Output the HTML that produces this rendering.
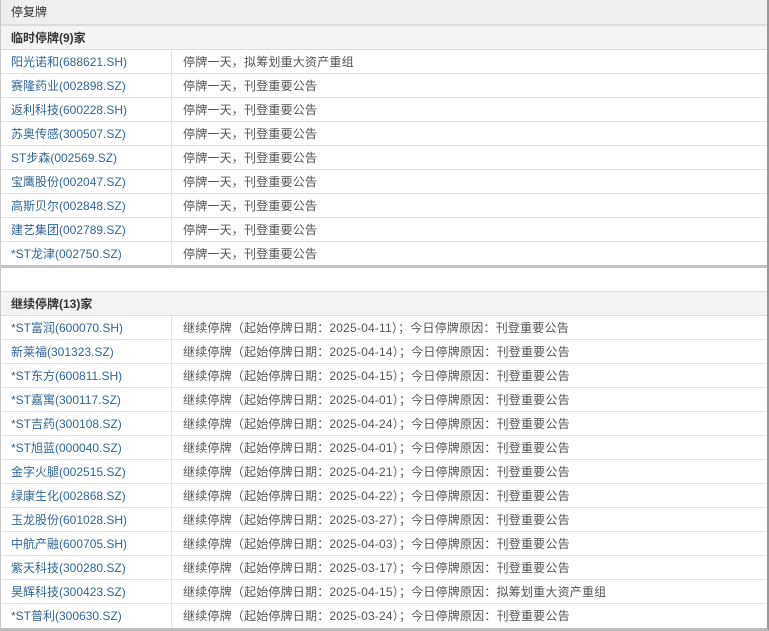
<!DOCTYPE html>
<html><head><meta charset="utf-8"><style>
*{margin:0;padding:0;box-sizing:border-box}
body{width:769px;height:631px;background:#fff;font-family:"Liberation Sans","Noto Sans CJK SC",sans-serif;font-size:12px;color:#555;position:relative;overflow:hidden}
.frame{position:absolute;left:0;top:0;width:769px;height:631px;border-left:1px solid #c8c8c8;border-right:2px solid #999;border-bottom:3px solid #bbb}
.bar{position:absolute;left:1px;right:2px;height:25px;line-height:25px;padding-left:10px;color:#333;border-bottom:1px solid #ddd}
.title{top:0;background:#efefef}
.hd{background:#f4f4f4;font-weight:bold;border-top:1px solid #ddd}
.row{position:absolute;left:1px;right:2px;height:24px;line-height:24px;border-bottom:1px solid #e2e2e2}
.row .a{position:absolute;left:0;width:171px;padding-left:10px;color:#336699;border-right:1px solid #e2e2e2;height:23px}
.row .b{position:absolute;left:182px;letter-spacing:0.2px}
.sep{position:absolute;left:1px;right:2px;top:265px;height:3px;background:#c4c4c4}
</style></head><body>
<div class="frame"></div>
<div class="bar title">停复牌</div>
<div class="bar hd" style="top:25px">临时停牌(9)家</div>
<div class="row" style="top:50px"><span class="a">阳光诺和(688621.SH)</span><span class="b">停牌一天，拟筹划重大资产重组</span></div>
<div class="row" style="top:74px"><span class="a">赛隆药业(002898.SZ)</span><span class="b">停牌一天，刊登重要公告</span></div>
<div class="row" style="top:98px"><span class="a">返利科技(600228.SH)</span><span class="b">停牌一天，刊登重要公告</span></div>
<div class="row" style="top:122px"><span class="a">苏奥传感(300507.SZ)</span><span class="b">停牌一天，刊登重要公告</span></div>
<div class="row" style="top:146px"><span class="a">ST步森(002569.SZ)</span><span class="b">停牌一天，刊登重要公告</span></div>
<div class="row" style="top:170px"><span class="a">宝鹰股份(002047.SZ)</span><span class="b">停牌一天，刊登重要公告</span></div>
<div class="row" style="top:194px"><span class="a">高斯贝尔(002848.SZ)</span><span class="b">停牌一天，刊登重要公告</span></div>
<div class="row" style="top:218px"><span class="a">建艺集团(002789.SZ)</span><span class="b">停牌一天，刊登重要公告</span></div>
<div class="row" style="top:242px;border-bottom:none"><span class="a">*ST龙津(002750.SZ)</span><span class="b">停牌一天，刊登重要公告</span></div>
<div class="sep"></div>
<div class="bar hd" style="top:291px">继续停牌(13)家</div>
<div class="row" style="top:316px"><span class="a">*ST富润(600070.SH)</span><span class="b">继续停牌（起始停牌日期：2025-04-11）；今日停牌原因：刊登重要公告</span></div>
<div class="row" style="top:340px"><span class="a">新莱福(301323.SZ)</span><span class="b">继续停牌（起始停牌日期：2025-04-14）；今日停牌原因：刊登重要公告</span></div>
<div class="row" style="top:364px"><span class="a">*ST东方(600811.SH)</span><span class="b">继续停牌（起始停牌日期：2025-04-15）；今日停牌原因：刊登重要公告</span></div>
<div class="row" style="top:388px"><span class="a">*ST嘉寓(300117.SZ)</span><span class="b">继续停牌（起始停牌日期：2025-04-01）；今日停牌原因：刊登重要公告</span></div>
<div class="row" style="top:412px"><span class="a">*ST吉药(300108.SZ)</span><span class="b">继续停牌（起始停牌日期：2025-04-24）；今日停牌原因：刊登重要公告</span></div>
<div class="row" style="top:436px"><span class="a">*ST旭蓝(000040.SZ)</span><span class="b">继续停牌（起始停牌日期：2025-04-01）；今日停牌原因：刊登重要公告</span></div>
<div class="row" style="top:460px"><span class="a">金字火腿(002515.SZ)</span><span class="b">继续停牌（起始停牌日期：2025-04-21）；今日停牌原因：刊登重要公告</span></div>
<div class="row" style="top:484px"><span class="a">绿康生化(002868.SZ)</span><span class="b">继续停牌（起始停牌日期：2025-04-22）；今日停牌原因：刊登重要公告</span></div>
<div class="row" style="top:508px"><span class="a">玉龙股份(601028.SH)</span><span class="b">继续停牌（起始停牌日期：2025-03-27）；今日停牌原因：刊登重要公告</span></div>
<div class="row" style="top:532px"><span class="a">中航产融(600705.SH)</span><span class="b">继续停牌（起始停牌日期：2025-04-03）；今日停牌原因：刊登重要公告</span></div>
<div class="row" style="top:556px"><span class="a">紫天科技(300280.SZ)</span><span class="b">继续停牌（起始停牌日期：2025-03-17）；今日停牌原因：刊登重要公告</span></div>
<div class="row" style="top:580px"><span class="a">昊辉科技(300423.SZ)</span><span class="b">继续停牌（起始停牌日期：2025-04-15）；今日停牌原因：拟筹划重大资产重组</span></div>
<div class="row" style="top:604px;border-bottom:none"><span class="a">*ST普利(300630.SZ)</span><span class="b">继续停牌（起始停牌日期：2025-03-24）；今日停牌原因：刊登重要公告</span></div>
</body></html>
